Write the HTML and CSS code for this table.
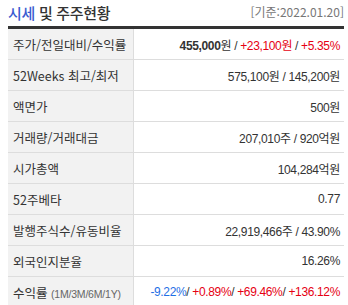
FILE: index.html
```html
<!DOCTYPE html>
<html lang="ko">
<head>
<meta charset="utf-8">
<link rel="stylesheet" href="styles.css">
</head>
<body>
<div class="box">
  <div class="head">
    <h2 class="title"><span class="blue">시세</span> 및 주주현황</h2>
    <span class="date">[기준:2022.01.20]</span>
  </div>
  <table class="tbl">
    <tr><th>주가/전일대비/수익률</th><td><b>455,000</b>원 / <span class="up">+23,100원</span> / <span class="up">+5.35%</span></td></tr>
    <tr><th>52Weeks 최고/최저</th><td>575,100원 / 145,200원</td></tr>
    <tr><th>액면가</th><td>500원</td></tr>
    <tr><th>거래량/거래대금</th><td>207,010주 / 920억원</td></tr>
    <tr><th>시가총액</th><td>104,284억원</td></tr>
    <tr><th>52주베타</th><td>0.77</td></tr>
    <tr><th>발행주식수/유동비율</th><td>22,919,466주 / 43.90%</td></tr>
    <tr><th>외국인지분율</th><td>16.26%</td></tr>
    <tr><th>수익률 <span class="sub">(1M/3M/6M/1Y)</span></th><td><span class="down">-9.22%</span>/ <span class="up">+0.89%</span>/ <span class="up">+69.46%</span>/ <span class="up">+136.12%</span></td></tr>
  </table>
</div>
</body>
</html>
```
FILE: styles.css
```css
html, body {
  margin: 0;
  padding: 0;
  background: #fff;
}
body {
  font-family: "Noto Sans CJK KR", "Liberation Sans", sans-serif;
  color: #333;
  overflow: hidden;
}
.box {
  width: 336px;
  margin-left: 8px;
}
.head {
  display: flex;
  justify-content: space-between;
  align-items: center;
  height: 26px;
}
.title {
  margin: 0;
  font-size: 15px;
  font-weight: 500;
  color: #333;
  letter-spacing: -0.3px;
  line-height: 22px;
  margin-top: -1px;
}
.blue {
  color: #3a5bd0;
}
.date {
  font-size: 12px;
  color: #777;
  margin-top: -4px;
}
.tbl {
  width: 100%;
  border-collapse: collapse;
  border-top: 3px solid #333;
  font-size: 12px;
}
.tbl th, .tbl td {
  height: 30px;
  padding: 0;
  border-bottom: 1px solid #ddd;
}
.tbl th {
  width: 120px;
  text-align: left;
  font-weight: normal;
  background: #f2f2f2;
  border-right: 1px solid #ddd;
  padding-left: 5px;
  font-size: 12.5px;
  color: #333;
  white-space: nowrap;
}
.tbl td {
  text-align: right;
  padding-right: 4px;
  font-family: "Liberation Sans", "Noto Sans CJK KR", sans-serif;
  font-size: 12px;
  letter-spacing: -0.35px;
  color: #333;
}
.tbl td b {
  font-weight: bold;
}
.up {
  color: #e60012;
}
.down {
  color: #1f6fe5;
}
.sub {
  font-size: 10.5px;
  color: #666;
  font-family: "Liberation Sans", sans-serif;
  letter-spacing: -0.2px;
}
```
